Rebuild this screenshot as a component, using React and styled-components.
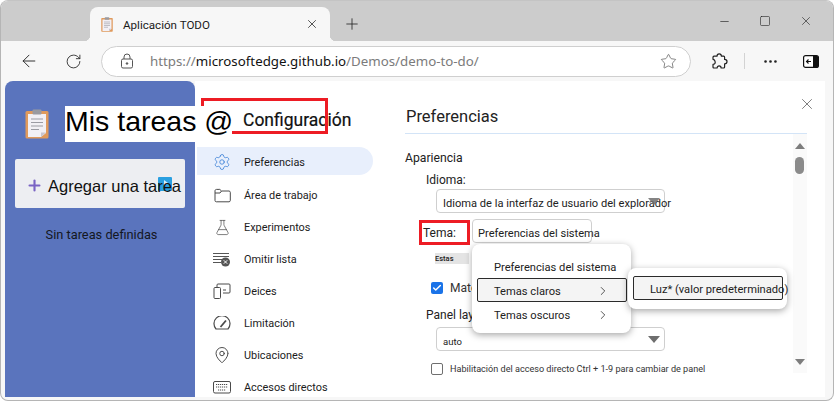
import React from "react";
import styled, { createGlobalStyle } from "styled-components";
import {
  ArrowLeft,
  RotateCw,
  Star,
  MoreHorizontal,
  X,
  Plus,
  Minus,
  Square,
  Settings,
  FlaskConical,
  MapPin,
  ChevronRight,
  Check,
} from "lucide-react";

const UI_FONT = `Roboto, "Noto Sans", "Liberation Sans", sans-serif`;

const GlobalStyle = createGlobalStyle`
  html, body {
    margin: 0;
    padding: 0;
    background: #fff;
    overflow: hidden;
  }
  body {
    font-family: ${UI_FONT};
    color: #1b1b1b;
  }
`;

const Window = styled.div`
  width: 834px;
  height: 401px;
  box-sizing: border-box;
  border: 1px solid #b5b5b5;
  border-top-color: #c4c4c4;
  border-radius: 8px;
  overflow: hidden;
  display: flex;
  flex-direction: column;
  background: #f7f7f7;
`;

const TabStrip = styled.div`
  height: 40px;
  flex: none;
  background: #cccccc;
  display: flex;
  align-items: flex-end;
  padding-left: 89px;
`;

const Tab = styled.div`
  position: relative;
  width: 240px;
  height: 34px;
  box-sizing: border-box;
  background: #f7f7f7;
  border-radius: 8px 8px 0 0;
  display: flex;
  align-items: center;
  padding: 0 11px;
  gap: 10px;

  &::before,
  &::after {
    content: "";
    position: absolute;
    bottom: 0;
    width: 6px;
    height: 6px;
  }
  &::before {
    left: -6px;
    background: radial-gradient(circle at 0 0, #cccccc 6px, #f7f7f7 6.5px);
  }
  &::after {
    right: -6px;
    background: radial-gradient(circle at 100% 0, #cccccc 6px, #f7f7f7 6.5px);
  }
`;

const TabTitle = styled.span`
  flex: 1;
  padding-top: 1px;
  font-size: 11.6px;
  color: #1a1a1a;
`;

const NewTab = styled.div`
  width: 44px;
  height: 34px;
  display: flex;
  align-items: center;
  justify-content: center;
`;

const WindowControls = styled.div`
  margin-left: auto;
  height: 40px;
  display: flex;
  align-items: center;
  gap: 19px;
  padding-right: 16px;
`;

const ControlSlot = styled.span`
  width: 22px;
  height: 22px;
  display: flex;
  align-items: center;
  justify-content: center;
`;

const Toolbar = styled.div`
  height: 40px;
  flex: none;
  display: flex;
  align-items: center;
  background: #f7f7f7;
  padding-left: 11px;
  box-sizing: border-box;
`;

const NavButton = styled.button`
  width: 34px;
  height: 34px;
  margin-left: ${(p) => p.$before || 0}px;
  margin-right: ${(p) => p.$gap || 0}px;
  padding: 0;
  border: 0;
  background: transparent;
  display: flex;
  align-items: center;
  justify-content: center;
  color: #222;
`;

const AddressBar = styled.div`
  width: 590px;
  height: 31px;
  box-sizing: border-box;
  margin-left: 11px;
  background: #fff;
  border: 1px solid #cfcfcf;
  border-radius: 16px;
  display: flex;
  align-items: center;
  padding: 0 13px 0 18px;
  font-family: "Noto Sans", sans-serif;
  font-size: 13.3px;
  color: #7b7b7b;
  white-space: nowrap;
`;

const Url = styled.span`
  margin-left: 16px;
  flex: 1;
`;

const Host = styled.span`
  color: #111;
`;

const ToolDivider = styled.span`
  width: 1px;
  height: 16px;
  background: #d3d3d3;
  margin: 0 8px;
`;

const Body = styled.div`
  flex: 1;
  min-height: 0;
  display: flex;
  padding: 0 8px 3px 4px;
`;

const AppPanel = styled.aside`
  width: 190px;
  flex: none;
  position: relative;
  z-index: 2;
  background: #5a74bd;
  border-radius: 8px 8px 0 0;
  padding: 25px 10px 0;
  box-sizing: border-box;
  display: flex;
  flex-direction: column;
`;

const AppHeader = styled.div`
  display: flex;
  align-items: center;
  gap: 16px;
  height: 36px;
  padding-left: 10px;

  svg {
    flex: none;
  }
`;

const AppTitle = styled.h1`
  margin: 0;
  flex: none;
  width: 167px;
  height: 36px;
  background: #fff;
  color: #000;
  font: 400 28.5px/31px "Liberation Sans", Arial, sans-serif;
  white-space: nowrap;
`;

const AddTask = styled.button`
  position: relative;
  margin-top: 17px;
  height: 49px;
  padding: 4px 0 0 11px;
  border: 0;
  border-radius: 2px;
  background: #edeef2;
  display: flex;
  align-items: center;
  gap: 5px;
  color: #111;
  font: 400 16.5px "Liberation Sans", Arial, sans-serif;
  white-space: nowrap;
`;

const AddLabel = styled.span`
  position: relative;
  z-index: 1;
  top: 1px;
`;

const AddBadge = styled.span`
  position: absolute;
  left: 143px;
  top: 18px;
  width: 14px;
  height: 14px;
  border-radius: 1px;
  background: #2a9fe0;

  &::after {
    content: "";
    position: absolute;
    left: 6px;
    top: 3px;
    border-left: 4px solid #d8eefa;
    border-top: 3px solid transparent;
    border-bottom: 3px solid transparent;
  }
`;

const EmptyNote = styled.p`
  margin: 19px 0 0;
  padding-left: 3px;
  text-align: center;
  font-size: 12.8px;
  color: #14171f;
`;

const SettingsPanel = styled.section`
  flex: 1;
  min-width: 0;
  position: relative;
  background: #fff;
  display: flex;
`;

const Sidebar = styled.nav`
  width: 210px;
  flex: none;
  overflow: hidden;
  padding-left: 2px;
  box-sizing: border-box;
`;

const SidebarTitle = styled.h2`
  margin: 0;
  height: 66px;
  padding: 28px 0 0 46px;
  box-sizing: border-box;
  font-size: 17.5px;
  font-weight: 400;
  line-height: 22px;
  color: #111;
  -webkit-text-stroke: 0.2px #111;
`;

const NavItem = styled.div`
  width: 176px;
  height: 28px;
  margin-bottom: ${(p) => (p.$active ? 5 : 4)}px;
  display: flex;
  align-items: center;
  gap: 13px;
  padding: 2px 0 0 16px;
  box-sizing: border-box;
  border-radius: 0 14px 14px 0;
  background: ${(p) => (p.$active ? "#e8effc" : "transparent")};
  font-size: 10.9px;
  color: #1c1c1c;
  white-space: nowrap;
`;

const NavIcon = styled.span`
  width: 18px;
  height: 18px;
  flex: none;
  display: flex;
  align-items: center;
  justify-content: center;
  color: ${(p) => p.$color || "#4a4a4a"};
`;

const Main = styled.div`
  width: 402px;
  flex: none;
  display: flex;
  flex-direction: column;
  min-height: 0;
`;

const MainHeader = styled.header`
  height: 53px;
  flex: none;
  box-sizing: border-box;
  padding: 23px 0 0 1px;
  border-bottom: 1px solid #d3e4f7;
  font-size: 16.5px;
  line-height: 26px;
  color: #222;
`;

const ScrollArea = styled.div`
  position: relative;
  flex: 1;
  display: flex;
  min-height: 0;
`;

const Form = styled.div`
  flex: 1;
  padding-top: 15px;
  min-width: 0;
  position: relative;
`;

const GroupTitle = styled.div`
  padding-top: 1px;
  margin-bottom: -1px;
  font-size: 12.2px;
  line-height: 16px;
  color: #222;
`;

const FieldLabel = styled.div`
  margin: 7px 0 1px 21px;
  font-size: 12px;
  line-height: 16px;
  color: #222;
`;

const SelectBox = styled.div`
  position: relative;
  margin-left: ${(p) => p.$indent ?? 31}px;
  width: ${(p) => p.$width || 229}px;
  height: 24px;
  box-sizing: border-box;
  border: 1px solid #cfcfcf;
  border-radius: 4px;
  padding: 4px 0 0 ${(p) => p.$inset ?? 6}px;
  display: flex;
  align-items: center;
  font-size: 11.1px;
  color: #222;
  white-space: nowrap;
  background: #fff;
`;

const Caret = styled.span`
  position: absolute;
  right: 4px;
  top: 8px;
  width: 0;
  height: 0;
  border-left: 6px solid transparent;
  border-right: 6px solid transparent;
  border-top: 7px solid #6e6e6e;
  opacity: ${(p) => p.$opacity || 1};
`;

const ThemeRow = styled.div`
  display: flex;
  align-items: center;
  margin-top: 6px;
`;

const ThemeLabel = styled.span`
  width: 67px;
  padding: 3px 0 0 18px;
  box-sizing: border-box;
  font-size: 12px;
  color: #222;
`;

const SmallNote = styled.div`
  margin: 10px 0 0 30px;
  width: 34px;
  height: 11px;
  background: #e4e4e4;
  font-size: 7.5px;
  font-weight: 500;
  line-height: 11px;
  color: #222;
  overflow: hidden;
`;

const CheckRow = styled.div`
  display: flex;
  align-items: center;
  margin: ${(p) => p.$top}px 0 0 26px;
  gap: 7px;
  font-size: ${(p) => p.$size || 12}px;
  color: #333;
  white-space: nowrap;
`;

const CheckBox = styled.span`
  width: 12px;
  height: 12px;
  flex: none;
  box-sizing: border-box;
  border-radius: 2px;
  border: ${(p) => (p.$checked ? "0" : "1px solid #6f6f6f")};
  background: ${(p) => (p.$checked ? "#1a73e8" : "#fff")};
  display: flex;
  align-items: center;
  justify-content: center;
  color: #fff;
`;

const PanelLabel = styled.div`
  margin: 12px 0 4px 21px;
  font-size: 12px;
  line-height: 16px;
  color: #222;
`;

const AutoValue = styled.span`
  font-size: 9.5px;
`;

const Scrollbar = styled.div`
  width: 14px;
  flex: none;
  background: #fafafa;
  position: relative;
  height: 239px;
`;

const ScrollArrow = styled.span`
  position: absolute;
  left: 2px;
  ${(p) => (p.$up ? "top: 9px;" : "bottom: 8px;")}
  width: 0;
  height: 0;
  border-left: 5px solid transparent;
  border-right: 5px solid transparent;
  ${(p) => (p.$up ? "border-bottom: 6px solid #7d7d7d;" : "border-top: 6px solid #7d7d7d;")}
`;

const ScrollThumb = styled.span`
  position: absolute;
  left: 2px;
  top: 23px;
  width: 9px;
  height: 17px;
  border-radius: 5px;
  background: #8b8b8b;
`;

const CloseButton = styled.span`
  position: absolute;
  right: 9px;
  top: 14px;
  color: #555;
  display: flex;
`;

const Callout = styled.span`
  position: absolute;
  box-sizing: border-box;
  border: 3px solid #ed1c24;
  pointer-events: none;
  z-index: 1;
`;

const Menu = styled.div`
  position: absolute;
  z-index: 3;
  box-sizing: border-box;
  background: #fff;
  border-radius: 8px;
  box-shadow: 0 2px 7px rgba(0, 0, 0, 0.35);
  padding: ${(p) => p.$pad};
  display: flex;
  flex-direction: column;
`;

const MenuItem = styled.div`
  height: 24px;
  box-sizing: border-box;
  display: flex;
  align-items: center;
  justify-content: space-between;
  border-radius: 2px;
  padding: 2px 16px 0 16px;
  border: ${(p) => (p.$open ? "1px solid #2b2b2b" : "1px solid transparent")};
  background: ${(p) => (p.$open ? "#f4f4f4" : "transparent")};
  font-size: 11.15px;
  color: #222;
  white-space: nowrap;
`;

const ClipboardIcon = ({ size = 30 }) => (
  <svg width={size * 0.8} height={size} viewBox="0 0 24 30">
    <rect x="0.5" y="2" width="23" height="27.5" rx="1.5" fill="#e09a5c" />
    <path d="M3 5h18v19l-5 4H3z" fill="#f2f0f5" />
    <path d="M16 28l5-4.5h-5z" fill="#c9c6cf" />
    <rect x="7.5" y="0.5" width="9" height="5" rx="1" fill="#9a9aa0" />
    <path d="M6 10h12M6 13.5h12M6 17h12M6 20.5h8" stroke="#9b9ba3" strokeWidth="1.2" />
  </svg>
);

const PuzzleIcon = () => (
  <svg width="17" height="17" viewBox="0 0 17 17" fill="none" stroke="#222" strokeWidth="1.2" strokeLinejoin="round">
    <path d="M6 3.2c0-1.5 1-2.4 2.2-2.4s2.2.9 2.2 2.4h2.2c.6 0 1 .4 1 1v2.2c1.5 0 2.4 1 2.4 2.1s-.9 2.3-2.4 2.3v3.2c0 .6-.4 1-1 1h-2.5c0-1.4-.9-2.2-2-2.2s-2 .8-2 2.2H3c-.6 0-1-.4-1-1v-2.6c1.3 0 2.2-.8 2.2-2S3.3 6.3 2 6.3V4.2c0-.6.4-1 1-1z" />
  </svg>
);

const SidebarToggleIcon = () => (
  <svg width="16" height="13" viewBox="0 0 16 13">
    <rect x="0.6" y="0.6" width="14.8" height="11.8" rx="2" fill="#fff" stroke="#111" strokeWidth="1.2" />
    <path d="M10 1h4a1.5 1.5 0 0 1 1.5 1.5v8A1.5 1.5 0 0 1 14 12h-4z" fill="#111" />
    <path d="M8 6.5H3.5M5.5 4.5l-2 2 2 2" stroke="#111" strokeWidth="1.1" fill="none" />
  </svg>
);

const LockIcon = () => (
  <svg width="14" height="16" viewBox="0 0 14 16" fill="none" stroke="#555" strokeWidth="1">
    <rect x="1.5" y="6" width="11" height="9" rx="1.5" />
    <path d="M4 6V4a3 3 0 0 1 6 0v2" />
    <circle cx="7" cy="10.5" r="0.8" fill="#555" />
  </svg>
);

const FolderIcon = () => (
  <svg width="17" height="15" viewBox="0 0 17 15" fill="none" stroke="#4a4a4a" strokeWidth="1">
    <path d="M1 3c0-1 .6-1.6 1.5-1.6h3.3L7.5 3H15c.7 0 1.3.6 1.3 1.3v8.2c0 .8-.6 1.3-1.3 1.3H2.3c-.8 0-1.3-.5-1.3-1.3z" />
    <path d="M1 5h5l1.5-2" />
  </svg>
);

const BlockListIcon = () => (
  <svg width="18" height="15" viewBox="0 0 18 15">
    <path d="M0 1.5h16M0 4.5h16M0 7.5h10M0 10.5h8" stroke="#555" strokeWidth="1" fill="none" />
    <circle cx="12.5" cy="10" r="4.5" fill="#555" />
    <path d="M10.8 8.3l3.4 3.4M14.2 8.3l-3.4 3.4" stroke="#fff" strokeWidth="1" />
  </svg>
);

const DevicesIcon = () => (
  <svg width="18" height="16" viewBox="0 0 18 16" fill="none" stroke="#4a4a4a" strokeWidth="1">
    <path d="M4 4V2a1 1 0 0 1 1-1h11a1 1 0 0 1 1 1v7a1 1 0 0 1-1 1h-6" />
    <rect x="1" y="4.5" width="6.5" height="11" rx="1" />
    <path d="M10 7h3" />
  </svg>
);

const GaugeIcon = () => (
  <svg width="18" height="14" viewBox="0 0 18 14" fill="none" stroke="#4a4a4a" strokeWidth="1.2">
    <path d="M3 13h12a8 8 0 1 0-12 0z" />
    <path d="M7.5 11L13 4.5" strokeWidth="1.8" />
  </svg>
);

const KeyboardIcon = () => (
  <svg width="18" height="13" viewBox="0 0 18 13" fill="none" stroke="#4a4a4a" strokeWidth="1">
    <rect x="0.5" y="0.5" width="17" height="11.5" rx="1.5" />
    <path d="M3 3.5h12M3 6h12M5 9h8" strokeDasharray="1.2 0.8" />
  </svg>
);

const navItems = [
  { label: "Preferencias", active: true, color: "#2f78d4", icon: <Settings size={18} strokeWidth={1} /> },
  { label: "Área de trabajo", icon: <FolderIcon /> },
  { label: "Experimentos", icon: <FlaskConical size={17} strokeWidth={1} /> },
  { label: "Omitir lista", icon: <BlockListIcon /> },
  { label: "Deices", icon: <DevicesIcon /> },
  { label: "Limitación", icon: <GaugeIcon /> },
  { label: "Ubicaciones", icon: <MapPin size={18} strokeWidth={1.3} /> },
  { label: "Accesos directos", icon: <KeyboardIcon /> },
];

export default function App() {
  return (
    <>
      <GlobalStyle />
      <Window>
        <TabStrip>
          <Tab>
            <ClipboardIcon size={15} />
            <TabTitle>Aplicación TODO</TabTitle>
            <X size={14} strokeWidth={1.3} color="#222" />
          </Tab>
          <NewTab>
            <Plus size={18} strokeWidth={1.1} color="#222" />
          </NewTab>
          <WindowControls>
            <ControlSlot><Minus size={13} strokeWidth={1.2} color="#222" /></ControlSlot>
            <ControlSlot><Square size={12} strokeWidth={1.2} color="#222" /></ControlSlot>
            <ControlSlot><X size={14} strokeWidth={1.1} color="#222" /></ControlSlot>
          </WindowControls>
        </TabStrip>
        <Toolbar>
          <NavButton $gap={10}><ArrowLeft size={20} strokeWidth={1.1} /></NavButton>
          <NavButton><RotateCw size={17} strokeWidth={1.2} /></NavButton>
          <AddressBar>
            <LockIcon />
            <Url>https://<Host>microsoftedge.github.io</Host>/Demos/demo-to-do/</Url>
            <Star size={17} strokeWidth={1} color="#555" />
          </AddressBar>
          <NavButton $before={11}><PuzzleIcon /></NavButton>
          <ToolDivider />
          <NavButton><MoreHorizontal size={17} strokeWidth={1.8} /></NavButton>
          <NavButton $before={7}><SidebarToggleIcon /></NavButton>
        </Toolbar>
        <Body>
          <AppPanel>
            <AppHeader>
              <ClipboardIcon size={30} />
              <AppTitle>Mis tareas @</AppTitle>
            </AppHeader>
            <AddTask>
              <Plus size={17} strokeWidth={3} color="#7a63c4" />
              <AddLabel>Agregar una tarea</AddLabel>
              <AddBadge />
            </AddTask>
            <EmptyNote>Sin tareas definidas</EmptyNote>
          </AppPanel>
          <SettingsPanel>
            <Callout style={{ left: 6, top: 17, width: 127, height: 36 }} />
            <Sidebar>
              <SidebarTitle>Configuración</SidebarTitle>
              {navItems.map((item) => (
                <NavItem key={item.label} $active={item.active}>
                  <NavIcon $color={item.color}>{item.icon}</NavIcon>
                  {item.label}
                </NavItem>
              ))}
            </Sidebar>
            <Main>
              <MainHeader>Preferencias</MainHeader>
              <ScrollArea>
                <Form>
                  <GroupTitle>Apariencia</GroupTitle>
                  <FieldLabel>Idioma:</FieldLabel>
                  <SelectBox>
                    Idioma de la interfaz de usuario del explorador
                    <Caret $opacity={0.85} />
                  </SelectBox>
                  <ThemeRow>
                    <ThemeLabel>Tema:</ThemeLabel>
                    <SelectBox $indent={0} $width={120} $inset={5}>
                      Preferencias del sistema
                    </SelectBox>
                  </ThemeRow>
                  <SmallNote>Estas</SmallNote>
                  <CheckRow $top={17}>
                    <CheckBox $checked><Check size={10} strokeWidth={3.5} /></CheckBox>
                    Mate
                  </CheckRow>
                  <PanelLabel>Panel lay</PanelLabel>
                  <SelectBox>
                    <AutoValue>auto</AutoValue>
                    <Caret />
                  </SelectBox>
                  <CheckRow $top={12} $size={9.1}>
                    <CheckBox />
                    Habilitación del acceso directo Ctrl + 1-9 para cambiar de panel
                  </CheckRow>
                  <Menu $pad="10px 4px 7px 5px" style={{ left: 67, top: 110, width: 159, height: 89 }}>
                    <MenuItem>Preferencias del sistema</MenuItem>
                    <MenuItem $open>
                      Temas claros
                      <ChevronRight size={14} strokeWidth={1.3} />
                    </MenuItem>
                    <MenuItem>
                      Temas oscuros
                      <ChevronRight size={14} strokeWidth={1.3} />
                    </MenuItem>
                  </Menu>
                  <Menu $pad="8px 4px 8px 5px" style={{ left: 223, top: 134, width: 159, height: 41 }}>
                    <MenuItem $open>Luz* (valor predeterminado)</MenuItem>
                  </Menu>
                  <Callout style={{ left: 14, top: 86, width: 51, height: 25 }} />
                </Form>
                <Scrollbar>
                  <ScrollArrow $up />
                  <ScrollThumb />
                  <ScrollArrow />
                </Scrollbar>
              </ScrollArea>
            </Main>
            <CloseButton><X size={18} strokeWidth={1} /></CloseButton>
          </SettingsPanel>
        </Body>
      </Window>
    </>
  );
}
